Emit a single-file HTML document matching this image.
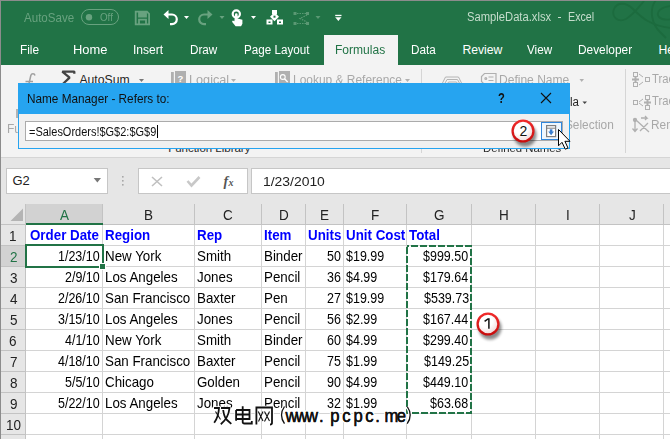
<!DOCTYPE html>
<html><head><meta charset="utf-8">
<style>
*{margin:0;padding:0;box-sizing:border-box}
html,body{width:670px;height:439px;overflow:hidden;background:#fff}
body{position:relative;font-family:"Liberation Sans",sans-serif}
.a{position:absolute}
.t{position:absolute;white-space:pre;line-height:1}
svg{position:absolute;overflow:visible}
</style></head><body>

<div class="a" style="left:0px;top:0px;width:670px;height:65px;background:#217346;"></div>
<svg style="left:0;top:0" width="670" height="65"><g fill="none" stroke="#1c6b3e" stroke-width="1.8">
<path d="M644,1 C639,7 633,15 626,19 C618,23 611,17 614,9 C617,2 626,2 633,9 C641,17 650,26 672,28"/>
<path d="M656,0 C649,9 651,24 661,33 L666,38"/>
<path d="M672,6 C662,6 655,12 659,17 C662,20 667,20 672,19"/>
</g></svg>
<div class="a" style="left:0px;top:0px;width:670px;height:1px;background:#8c8c8c;"></div>
<div class="a" style="left:0px;top:0px;width:1px;height:439px;background:#8c8c8c;"></div>
<div class="t" style="left:24.40px;top:11.69px;font-size:12.06px;color:#68a27f;font-weight:400;transform:scaleX(0.9603);transform-origin:0 0;">AutoSave</div>
<div class="a" style="left:81px;top:9px;width:38px;height:16px;background:transparent;border:1.2px solid #68a27f;border-radius:8px"></div>
<svg style="left:0;top:0" width="670" height="36"><circle cx="89" cy="17.2" r="3.2" fill="#68a27f"/></svg>
<div class="t" style="left:99.86px;top:11.87px;font-size:10.90px;color:#68a27f;font-weight:400;transform:scaleX(0.8993);transform-origin:0 0;">Off</div>
<div class="t" style="left:466.80px;top:11.40px;font-size:12.65px;color:#c5ddcc;font-weight:400;transform:scaleX(0.8874);transform-origin:0 0;">SampleData.xlsx</div>
<div class="a" style="left:558px;top:17px;width:3px;height:1.2px;background:#c5ddcc;"></div>
<div class="t" style="left:567.84px;top:11.40px;font-size:12.65px;color:#c5ddcc;font-weight:400;transform:scaleX(0.8458);transform-origin:0 0;">Excel</div>
<svg style="left:0;top:0" width="670" height="36">
<g fill="none" stroke="#68a27f" stroke-width="1.8">
<path d="M135.7,11.7 h11.3 l2.1,2.1 v10.5 h-13.4 z"/>
<path d="M139,12 v4.5 h7 v-4.5"/>
<path d="M139,24.5 v-4.8 h7 v4.8"/>
</g>
<rect x="139" y="12" width="7" height="4.5" fill="#68a27f"/>
<g fill="none" stroke="#fff" stroke-width="2.2">
<path d="M167,14.5 h5 a4.8,4.8 0 0 1 0,9.6 h-2"/>
</g>
<polygon points="163.5,14.5 168.5,10 168.5,19" fill="#fff"/>
<polygon points="184,16 189,16 186.5,19" fill="#fff"/>
<g fill="none" stroke="#68a27f" stroke-width="2.2">
<path d="M209,14.5 h-5 a4.8,4.8 0 0 0 0,9.6 h2"/>
</g>
<polygon points="212.5,14.5 207.5,10 207.5,19" fill="#68a27f"/>
<polygon points="219.5,16 224.5,16 222,19" fill="#68a27f"/>
<circle cx="236.3" cy="14" r="3.6" fill="none" stroke="#fff" stroke-width="2.2"/>
<path d="M235,14.5 a1.3,1.3 0 0 1 2.6,0 v4 l4.8,1.2 v4 l-1.3,2.5 h-5.5 l-3.6,-4.5 l0.8,-1.2 l1.6,0.8 z" fill="#fff"/>
<polygon points="251,16 256,16 253.5,19" fill="#fff"/>
<g fill="#fff">
<rect x="272" y="10" width="5" height="4.2"/>
<rect x="266.5" y="19.5" width="6" height="5"/>
<rect x="277" y="19.5" width="6" height="5"/>
<rect x="271.3" y="13.5" width="6.4" height="6.4" transform="rotate(45 274.5 16.7)"/>
</g>
<g fill="#217346">
<rect x="273.5" y="15.7" width="2" height="2"/>
<rect x="268.5" y="21.5" width="2" height="1.5"/>
<rect x="279" y="21.5" width="2" height="1.5"/>
</g>
<g fill="#5a9873">
<rect x="293.5" y="12" width="3" height="3"/><rect x="306" y="12" width="3" height="3"/><rect x="293.5" y="22" width="3" height="3"/><rect x="306" y="22" width="3" height="3"/>
</g>
<g fill="none" stroke="#5a9873" stroke-width="1.2">
<path d="M297,13.5 h9 M307,15 l-7,3.5 l7,3.5 M297,23.5 h9" stroke-dasharray="1.5 1"/>
</g>
<polygon points="315.5,16 320.5,16 318,19" fill="#5a9873"/>
<rect x="335.2" y="14.8" width="6.3" height="1.3" fill="#fff"/>
<polygon points="335.2,17.3 341.5,17.3 338.35,21" fill="#fff"/>
</svg>

<div class="a" style="left:324px;top:35px;width:74px;height:30px;background:#f3f3f3;"></div>
<div class="t" style="left:20.35px;top:43.86px;font-size:12.21px;color:#fff;font-weight:400;transform:scaleX(0.9707);transform-origin:0 0;">File</div>
<div class="t" style="left:73.47px;top:43.86px;font-size:12.21px;color:#fff;font-weight:400;transform:scaleX(1.0577);transform-origin:0 0;">Home</div>
<div class="t" style="left:132.91px;top:43.86px;font-size:12.21px;color:#fff;font-weight:400;transform:scaleX(0.9876);transform-origin:0 0;">Insert</div>
<div class="t" style="left:189.66px;top:43.86px;font-size:12.21px;color:#fff;font-weight:400;transform:scaleX(0.9589);transform-origin:0 0;">Draw</div>
<div class="t" style="left:243.57px;top:43.86px;font-size:12.21px;color:#fff;font-weight:400;transform:scaleX(0.9553);transform-origin:0 0;">Page Layout</div>
<div class="t" style="left:335.34px;top:43.86px;font-size:12.21px;color:#217346;font-weight:400;transform:scaleX(0.9877);transform-origin:0 0;">Formulas</div>
<div class="t" style="left:411.06px;top:43.86px;font-size:12.21px;color:#fff;font-weight:400;transform:scaleX(0.9603);transform-origin:0 0;">Data</div>
<div class="t" style="left:462.42px;top:43.86px;font-size:12.21px;color:#fff;font-weight:400;">Review</div>
<div class="t" style="left:526.94px;top:43.86px;font-size:12.21px;color:#fff;font-weight:400;transform:scaleX(0.9546);transform-origin:0 0;">View</div>
<div class="t" style="left:578.05px;top:43.86px;font-size:12.21px;color:#fff;font-weight:400;transform:scaleX(0.9733);transform-origin:0 0;">Developer</div>
<div class="t" style="left:658.52px;top:43.86px;font-size:12.21px;color:#fff;font-weight:400;">Help</div>
<div class="a" style="left:1px;top:65px;width:669px;height:92px;background:#f3f3f3;"></div>
<div class="a" style="left:1px;top:157px;width:669px;height:1px;background:#d5d5d5;"></div>
<div class="a" style="left:421px;top:69px;width:1px;height:84px;background:#d5d5d5;"></div>
<div class="a" style="left:625px;top:69px;width:1px;height:84px;background:#d5d5d5;"></div>
<div class="t" style="left:79.40px;top:73.86px;font-size:12.21px;color:#262626;font-weight:400;">AutoSum</div>
<div class="t" style="left:189.19px;top:73.86px;font-size:12.21px;color:#a8a8a8;font-weight:400;transform:scaleX(1.0387);transform-origin:0 0;">Logical</div>
<div class="t" style="left:293.04px;top:73.86px;font-size:12.21px;color:#a8a8a8;font-weight:400;transform:scaleX(0.9794);transform-origin:0 0;">Lookup &amp; Reference</div>
<div class="t" style="left:499.04px;top:73.86px;font-size:12.21px;color:#a8a8a8;font-weight:400;transform:scaleX(0.9869);transform-origin:0 0;">Define Name</div>
<div class="t" style="left:652.07px;top:72.80px;font-size:12.65px;color:#a8a8a8;font-weight:400;transform:scaleX(0.8923);transform-origin:0 0;">Trace</div>
<div class="t" style="left:652.07px;top:95.07px;font-size:12.79px;color:#a8a8a8;font-weight:400;transform:scaleX(0.8821);transform-origin:0 0;">Trace</div>
<div class="t" style="left:651.35px;top:118.54px;font-size:12.35px;color:#a8a8a8;font-weight:400;transform:scaleX(0.9601);transform-origin:0 0;">Remove</div>
<div class="t" style="left:569.55px;top:96.32px;font-size:12.50px;color:#262626;font-weight:400;transform:scaleX(0.9239);transform-origin:0 0;">la</div>
<div class="t" style="left:499.41px;top:119.32px;font-size:12.50px;color:#a8a8a8;font-weight:400;transform:scaleX(0.9495);transform-origin:0 0;">Create from Selection</div>
<div class="t" style="left:6.64px;top:123.26px;font-size:12.21px;color:#a8a8a8;font-weight:400;transform:scaleX(0.9855);transform-origin:0 0;">Function</div>
<div class="a" style="left:16px;top:109px;width:2px;height:9px;background:#b4b4b4;"></div>
<div class="t" style="left:168.17px;top:143.48px;font-size:11.48px;color:#2a2a2a;font-weight:400;">Function Library</div>
<div class="t" style="left:483.29px;top:143.48px;font-size:11.48px;color:#2a2a2a;font-weight:400;transform:scaleX(0.9898);transform-origin:0 0;">Defined Names</div>
<svg style="left:0;top:0" width="670" height="160">
<path d="M35,75.5 C34.5,73 31.5,73 30.8,75.5 L28.8,84.5 M25.5,81.6 H33" fill="none" stroke="#a0a0a0" stroke-width="1.5"/>
<path d="M74.3,73.8 V71.6 H62.3 L69.6,77.6 L62.8,84" fill="none" stroke="#444" stroke-width="2.3" stroke-linejoin="bevel"/>
<polygon points="139,79 144,79 141.5,82" fill="#777"/>
<rect x="171" y="72" width="2.8" height="12" fill="#b0b0b0"/>
<rect x="175" y="71" width="11" height="13" fill="#b0b0b0"/>
<text x="177.5" y="82" font-family="Liberation Sans" font-weight="bold" font-size="9.5" fill="#fff">?</text>
<polygon points="231,79 236,79 233.5,82" fill="#b0b0b0"/>
<rect x="275" y="72" width="2.8" height="12" fill="#b0b0b0"/>
<rect x="279" y="71" width="11" height="13" fill="#b0b0b0"/>
<circle cx="282.8" cy="77" r="2.4" fill="none" stroke="#fff" stroke-width="1.1"/>
<path d="M284.5,78.8 l3.2,3.2" stroke="#fff" stroke-width="1.4"/>
<polygon points="405,79 410,79 407.5,82" fill="#b0b0b0"/>
<g fill="none" stroke="#b4b4b4" stroke-width="1"><path d="M441,86 l4.5,-9 h13 l4.5,9 M443.5,86 l3.5,-6.5 h10.5 l3.5,6.5 M446,86 l2.5,-4 h8 l2.5,4"/></g>
<g fill="none" stroke="#b0b0b0" stroke-width="1.2"><path d="M484.5,73.5 h11.5 v11 h-11.5 l-3,-3 v-5 z"/><circle cx="485.8" cy="78.5" r="0.9"/><path d="M488.5,77 h5 M488.5,80.5 h5"/></g>
<polygon points="579.5,79 584,79 581.7,82" fill="#b0b0b0"/>
<polygon points="582.5,101.5 587,101.5 584.7,104" fill="#444"/>
<g fill="none" stroke="#b0b0b0" stroke-width="1"><rect x="633.5" y="72.5" width="4" height="4"/><rect x="633.5" y="82.5" width="4" height="4"/><rect x="645.5" y="77.5" width="4" height="4"/><path d="M639,74 l4,3 M639,85 l4,-3"/></g>
<g fill="#b0b0b0"><rect x="632" y="78.5" width="7" height="2"/><rect x="634.5" y="76" width="2" height="7"/></g>
<g fill="none" stroke="#b0b0b0" stroke-width="1"><rect x="633.5" y="100.5" width="4" height="4"/><rect x="645.5" y="95.5" width="4" height="4"/><rect x="645.5" y="105.5" width="4" height="4"/><path d="M639,102 l4,-3 M639,103 l4,3"/></g>
<g fill="#b0b0b0"><rect x="644" y="101.5" width="7" height="2"/><rect x="646.5" y="99" width="2" height="7"/></g>
<g fill="none" stroke="#b0b0b0" stroke-width="1.3"><circle cx="635" cy="120" r="1.5" fill="#b0b0b0"/><path d="M635,120 v11 M632.5,128.5 l2.5,3 l2.5,-3 M636,120 l13,12 M640,131 l8,-8 M641,118 h6 l-2,-2 M647,118 l-2,2"/></g>
</svg>

<div class="a" style="left:1px;top:158px;width:669px;height:46px;background:#e6e6e6;"></div>
<div class="a" style="left:6px;top:168px;width:102px;height:26px;background:#fff;border:1px solid #c6c6c6"></div>
<div class="t" style="left:12.55px;top:175.15px;font-size:12.94px;color:#222;font-weight:400;">G2</div>
<div class="a" style="left:138px;top:168px;width:110px;height:26px;background:#fff;border:1px solid #c6c6c6"></div>
<div class="a" style="left:251px;top:168px;width:420px;height:26px;background:#fff;border:1px solid #c6c6c6"></div>
<div class="t" style="left:262.56px;top:174.78px;font-size:13.37px;color:#222;font-weight:400;transform:scaleX(1.0408);transform-origin:0 0;">1/23/2010</div>
<svg style="left:0;top:0" width="670" height="204">
<polygon points="93.7,178 101,178 97.35,182.4" fill="#777"/>
<g fill="#a8a8a8"><rect x="122" y="176" width="1.6" height="1.6"/><rect x="122" y="180" width="1.6" height="1.6"/><rect x="122" y="184" width="1.6" height="1.6"/></g>
<path d="M152,177 l10,9 M162,177 l-10,9" stroke="#c0c0c0" stroke-width="1.6"/>
<path d="M187.5,181 l4,4.5 l8,-8.5" fill="none" stroke="#c8c8c8" stroke-width="2.6"/>
<text x="223.5" y="185.5" font-family="Liberation Serif" font-style="italic" font-weight="bold" font-size="14" fill="#555">f</text>
<text x="228.5" y="185.5" font-family="Liberation Serif" font-style="italic" font-weight="bold" font-size="10" fill="#555">x</text>
</svg>

<div class="a" style="left:1px;top:204px;width:669px;height:21px;background:#e6e6e6;"></div>
<div class="a" style="left:1px;top:225px;width:25px;height:214px;background:#e6e6e6;"></div>
<div class="a" style="left:26px;top:204px;width:76px;height:19px;background:#d2d2d2;"></div>
<div class="a" style="left:1px;top:246px;width:24px;height:20px;background:#d2d2d2;"></div>
<svg style="left:0;top:0" width="670" height="439"><polygon points="23,208.5 23,221 10.5,221" fill="#b4b4b4"/></svg>
<div class="a" style="left:102px;top:204px;width:1px;height:20px;background:#c3c3c3;"></div>
<div class="a" style="left:102px;top:225px;width:1px;height:214px;background:#d4d4d4;"></div>
<div class="a" style="left:194px;top:204px;width:1px;height:20px;background:#c3c3c3;"></div>
<div class="a" style="left:194px;top:225px;width:1px;height:214px;background:#d4d4d4;"></div>
<div class="a" style="left:261px;top:204px;width:1px;height:20px;background:#c3c3c3;"></div>
<div class="a" style="left:261px;top:225px;width:1px;height:214px;background:#d4d4d4;"></div>
<div class="a" style="left:305px;top:204px;width:1px;height:20px;background:#c3c3c3;"></div>
<div class="a" style="left:305px;top:225px;width:1px;height:214px;background:#d4d4d4;"></div>
<div class="a" style="left:343px;top:204px;width:1px;height:20px;background:#c3c3c3;"></div>
<div class="a" style="left:343px;top:225px;width:1px;height:214px;background:#d4d4d4;"></div>
<div class="a" style="left:406px;top:204px;width:1px;height:20px;background:#c3c3c3;"></div>
<div class="a" style="left:406px;top:225px;width:1px;height:214px;background:#d4d4d4;"></div>
<div class="a" style="left:471px;top:204px;width:1px;height:20px;background:#c3c3c3;"></div>
<div class="a" style="left:471px;top:225px;width:1px;height:214px;background:#d4d4d4;"></div>
<div class="a" style="left:535px;top:204px;width:1px;height:20px;background:#c3c3c3;"></div>
<div class="a" style="left:535px;top:225px;width:1px;height:214px;background:#d4d4d4;"></div>
<div class="a" style="left:599px;top:204px;width:1px;height:20px;background:#c3c3c3;"></div>
<div class="a" style="left:599px;top:225px;width:1px;height:214px;background:#d4d4d4;"></div>
<div class="a" style="left:663px;top:204px;width:1px;height:20px;background:#c3c3c3;"></div>
<div class="a" style="left:663px;top:225px;width:1px;height:214px;background:#d4d4d4;"></div>
<div class="a" style="left:25px;top:204px;width:1px;height:235px;background:#c3c3c3;"></div>
<div class="a" style="left:1px;top:224px;width:669px;height:1px;background:#c3c3c3;"></div>
<div class="a" style="left:26px;top:223px;width:77px;height:2px;background:#217346;"></div>
<div class="a" style="left:1px;top:245px;width:24px;height:1px;background:#c3c3c3;"></div>
<div class="a" style="left:26px;top:245px;width:644px;height:1px;background:#d4d4d4;"></div>
<div class="a" style="left:1px;top:266px;width:24px;height:1px;background:#c3c3c3;"></div>
<div class="a" style="left:26px;top:266px;width:644px;height:1px;background:#d4d4d4;"></div>
<div class="a" style="left:1px;top:287px;width:24px;height:1px;background:#c3c3c3;"></div>
<div class="a" style="left:26px;top:287px;width:644px;height:1px;background:#d4d4d4;"></div>
<div class="a" style="left:1px;top:308px;width:24px;height:1px;background:#c3c3c3;"></div>
<div class="a" style="left:26px;top:308px;width:644px;height:1px;background:#d4d4d4;"></div>
<div class="a" style="left:1px;top:329px;width:24px;height:1px;background:#c3c3c3;"></div>
<div class="a" style="left:26px;top:329px;width:644px;height:1px;background:#d4d4d4;"></div>
<div class="a" style="left:1px;top:350px;width:24px;height:1px;background:#c3c3c3;"></div>
<div class="a" style="left:26px;top:350px;width:644px;height:1px;background:#d4d4d4;"></div>
<div class="a" style="left:1px;top:371px;width:24px;height:1px;background:#c3c3c3;"></div>
<div class="a" style="left:26px;top:371px;width:644px;height:1px;background:#d4d4d4;"></div>
<div class="a" style="left:1px;top:392px;width:24px;height:1px;background:#c3c3c3;"></div>
<div class="a" style="left:26px;top:392px;width:644px;height:1px;background:#d4d4d4;"></div>
<div class="a" style="left:1px;top:413px;width:24px;height:1px;background:#c3c3c3;"></div>
<div class="a" style="left:26px;top:413px;width:644px;height:1px;background:#d4d4d4;"></div>
<div class="a" style="left:1px;top:434px;width:24px;height:1px;background:#c3c3c3;"></div>
<div class="a" style="left:26px;top:434px;width:644px;height:1px;background:#d4d4d4;"></div>
<div class="t" style="left:59.81px;top:207.10px;font-size:15.00px;color:#217346;font-weight:400;transform:scaleX(0.9000);transform-origin:0 0;">A</div>
<div class="t" style="left:144.11px;top:207.10px;font-size:15.00px;color:#222;font-weight:400;transform:scaleX(0.9000);transform-origin:0 0;">B</div>
<div class="t" style="left:223.34px;top:207.10px;font-size:15.00px;color:#222;font-weight:400;transform:scaleX(0.9000);transform-origin:0 0;">C</div>
<div class="t" style="left:278.70px;top:207.10px;font-size:15.00px;color:#222;font-weight:400;transform:scaleX(0.9000);transform-origin:0 0;">D</div>
<div class="t" style="left:320.04px;top:207.10px;font-size:15.00px;color:#222;font-weight:400;transform:scaleX(0.9000);transform-origin:0 0;">E</div>
<div class="t" style="left:370.91px;top:207.10px;font-size:15.00px;color:#222;font-weight:400;transform:scaleX(0.9000);transform-origin:0 0;">F</div>
<div class="t" style="left:434.20px;top:207.10px;font-size:15.00px;color:#222;font-weight:400;transform:scaleX(0.9000);transform-origin:0 0;">G</div>
<div class="t" style="left:498.94px;top:207.10px;font-size:15.00px;color:#222;font-weight:400;transform:scaleX(0.9000);transform-origin:0 0;">H</div>
<div class="t" style="left:565.94px;top:207.10px;font-size:15.00px;color:#222;font-weight:400;transform:scaleX(0.9000);transform-origin:0 0;">I</div>
<div class="t" style="left:628.83px;top:207.10px;font-size:15.00px;color:#222;font-weight:400;transform:scaleX(0.9000);transform-origin:0 0;">J</div>
<div class="t" style="left:9.35px;top:228.30px;font-size:15.00px;color:#222;font-weight:400;transform:scaleX(0.9000);transform-origin:0 0;">1</div>
<div class="t" style="left:9.55px;top:249.30px;font-size:15.00px;color:#217346;font-weight:400;transform:scaleX(0.9000);transform-origin:0 0;">2</div>
<div class="t" style="left:9.55px;top:270.30px;font-size:15.00px;color:#222;font-weight:400;transform:scaleX(0.9000);transform-origin:0 0;">3</div>
<div class="t" style="left:9.62px;top:291.30px;font-size:15.00px;color:#222;font-weight:400;transform:scaleX(0.9000);transform-origin:0 0;">4</div>
<div class="t" style="left:9.55px;top:312.30px;font-size:15.00px;color:#222;font-weight:400;transform:scaleX(0.9000);transform-origin:0 0;">5</div>
<div class="t" style="left:9.49px;top:333.30px;font-size:15.00px;color:#222;font-weight:400;transform:scaleX(0.9000);transform-origin:0 0;">6</div>
<div class="t" style="left:9.55px;top:354.30px;font-size:15.00px;color:#222;font-weight:400;transform:scaleX(0.9000);transform-origin:0 0;">7</div>
<div class="t" style="left:9.52px;top:375.30px;font-size:15.00px;color:#222;font-weight:400;transform:scaleX(0.9000);transform-origin:0 0;">8</div>
<div class="t" style="left:9.55px;top:396.30px;font-size:15.00px;color:#222;font-weight:400;transform:scaleX(0.9000);transform-origin:0 0;">9</div>
<div class="t" style="left:5.54px;top:417.30px;font-size:15.00px;color:#222;font-weight:400;transform:scaleX(0.9000);transform-origin:0 0;">10</div>
<div class="t" style="left:30.30px;top:227.78px;font-size:14.20px;color:#0000ff;font-weight:700;transform:scaleX(0.9400);transform-origin:0 0;">Order Date</div>
<div class="t" style="left:104.80px;top:227.78px;font-size:14.20px;color:#0000ff;font-weight:700;transform:scaleX(0.9400);transform-origin:0 0;">Region</div>
<div class="t" style="left:196.80px;top:227.78px;font-size:14.20px;color:#0000ff;font-weight:700;transform:scaleX(0.9400);transform-origin:0 0;">Rep</div>
<div class="t" style="left:263.80px;top:227.78px;font-size:14.20px;color:#0000ff;font-weight:700;transform:scaleX(0.9400);transform-origin:0 0;">Item</div>
<div class="t" style="left:307.80px;top:227.78px;font-size:14.20px;color:#0000ff;font-weight:700;transform:scaleX(0.9400);transform-origin:0 0;">Units</div>
<div class="t" style="left:345.80px;top:227.78px;font-size:14.20px;color:#0000ff;font-weight:700;transform:scaleX(0.9400);transform-origin:0 0;">Unit Cost</div>
<div class="t" style="left:408.80px;top:227.78px;font-size:14.20px;color:#0000ff;font-weight:700;transform:scaleX(0.9400);transform-origin:0 0;">Total</div>
<div class="t" style="left:57.96px;top:248.78px;font-size:14.20px;color:#000;font-weight:400;transform:scaleX(0.8800);transform-origin:0 0;">1/23/10</div>
<div class="t" style="left:104.80px;top:248.78px;font-size:14.20px;color:#000;font-weight:400;transform:scaleX(0.9400);transform-origin:0 0;">New York</div>
<div class="t" style="left:196.80px;top:248.78px;font-size:14.20px;color:#000;font-weight:400;transform:scaleX(0.9400);transform-origin:0 0;">Smith</div>
<div class="t" style="left:263.80px;top:248.78px;font-size:14.20px;color:#000;font-weight:400;transform:scaleX(0.9400);transform-origin:0 0;">Binder</div>
<div class="t" style="left:326.77px;top:248.78px;font-size:14.20px;color:#000;font-weight:400;transform:scaleX(0.8800);transform-origin:0 0;">50</div>
<div class="t" style="left:345.80px;top:248.78px;font-size:14.20px;color:#000;font-weight:400;transform:scaleX(0.8800);transform-origin:0 0;">$19.99</div>
<div class="t" style="left:423.46px;top:248.78px;font-size:14.20px;color:#000;font-weight:400;transform:scaleX(0.8800);transform-origin:0 0;">$999.50</div>
<div class="t" style="left:64.90px;top:269.78px;font-size:14.20px;color:#000;font-weight:400;transform:scaleX(0.8800);transform-origin:0 0;">2/9/10</div>
<div class="t" style="left:104.80px;top:269.78px;font-size:14.20px;color:#000;font-weight:400;transform:scaleX(0.9400);transform-origin:0 0;">Los Angeles</div>
<div class="t" style="left:196.80px;top:269.78px;font-size:14.20px;color:#000;font-weight:400;transform:scaleX(0.9400);transform-origin:0 0;">Jones</div>
<div class="t" style="left:263.80px;top:269.78px;font-size:14.20px;color:#000;font-weight:400;transform:scaleX(0.9400);transform-origin:0 0;">Pencil</div>
<div class="t" style="left:326.83px;top:269.78px;font-size:14.20px;color:#000;font-weight:400;transform:scaleX(0.8800);transform-origin:0 0;">36</div>
<div class="t" style="left:345.80px;top:269.78px;font-size:14.20px;color:#000;font-weight:400;transform:scaleX(0.8800);transform-origin:0 0;">$4.99</div>
<div class="t" style="left:423.40px;top:269.78px;font-size:14.20px;color:#000;font-weight:400;transform:scaleX(0.8800);transform-origin:0 0;">$179.64</div>
<div class="t" style="left:57.96px;top:290.78px;font-size:14.20px;color:#000;font-weight:400;transform:scaleX(0.8800);transform-origin:0 0;">2/26/10</div>
<div class="t" style="left:104.80px;top:290.78px;font-size:14.20px;color:#000;font-weight:400;transform:scaleX(0.9400);transform-origin:0 0;">San Francisco</div>
<div class="t" style="left:196.80px;top:290.78px;font-size:14.20px;color:#000;font-weight:400;transform:scaleX(0.9400);transform-origin:0 0;">Baxter</div>
<div class="t" style="left:263.80px;top:290.78px;font-size:14.20px;color:#000;font-weight:400;transform:scaleX(0.9400);transform-origin:0 0;">Pen</div>
<div class="t" style="left:326.95px;top:290.78px;font-size:14.20px;color:#000;font-weight:400;transform:scaleX(0.8800);transform-origin:0 0;">27</div>
<div class="t" style="left:345.80px;top:290.78px;font-size:14.20px;color:#000;font-weight:400;transform:scaleX(0.8800);transform-origin:0 0;">$19.99</div>
<div class="t" style="left:423.53px;top:290.78px;font-size:14.20px;color:#000;font-weight:400;transform:scaleX(0.8800);transform-origin:0 0;">$539.73</div>
<div class="t" style="left:57.96px;top:311.78px;font-size:14.20px;color:#000;font-weight:400;transform:scaleX(0.8800);transform-origin:0 0;">3/15/10</div>
<div class="t" style="left:104.80px;top:311.78px;font-size:14.20px;color:#000;font-weight:400;transform:scaleX(0.9400);transform-origin:0 0;">Los Angeles</div>
<div class="t" style="left:196.80px;top:311.78px;font-size:14.20px;color:#000;font-weight:400;transform:scaleX(0.9400);transform-origin:0 0;">Jones</div>
<div class="t" style="left:263.80px;top:311.78px;font-size:14.20px;color:#000;font-weight:400;transform:scaleX(0.9400);transform-origin:0 0;">Pencil</div>
<div class="t" style="left:326.83px;top:311.78px;font-size:14.20px;color:#000;font-weight:400;transform:scaleX(0.8800);transform-origin:0 0;">56</div>
<div class="t" style="left:345.80px;top:311.78px;font-size:14.20px;color:#000;font-weight:400;transform:scaleX(0.8800);transform-origin:0 0;">$2.99</div>
<div class="t" style="left:423.40px;top:311.78px;font-size:14.20px;color:#000;font-weight:400;transform:scaleX(0.8800);transform-origin:0 0;">$167.44</div>
<div class="t" style="left:64.90px;top:332.78px;font-size:14.20px;color:#000;font-weight:400;transform:scaleX(0.8800);transform-origin:0 0;">4/1/10</div>
<div class="t" style="left:104.80px;top:332.78px;font-size:14.20px;color:#000;font-weight:400;transform:scaleX(0.9400);transform-origin:0 0;">New York</div>
<div class="t" style="left:196.80px;top:332.78px;font-size:14.20px;color:#000;font-weight:400;transform:scaleX(0.9400);transform-origin:0 0;">Smith</div>
<div class="t" style="left:263.80px;top:332.78px;font-size:14.20px;color:#000;font-weight:400;transform:scaleX(0.9400);transform-origin:0 0;">Binder</div>
<div class="t" style="left:326.77px;top:332.78px;font-size:14.20px;color:#000;font-weight:400;transform:scaleX(0.8800);transform-origin:0 0;">60</div>
<div class="t" style="left:345.80px;top:332.78px;font-size:14.20px;color:#000;font-weight:400;transform:scaleX(0.8800);transform-origin:0 0;">$4.99</div>
<div class="t" style="left:423.46px;top:332.78px;font-size:14.20px;color:#000;font-weight:400;transform:scaleX(0.8800);transform-origin:0 0;">$299.40</div>
<div class="t" style="left:57.96px;top:353.78px;font-size:14.20px;color:#000;font-weight:400;transform:scaleX(0.8800);transform-origin:0 0;">4/18/10</div>
<div class="t" style="left:104.80px;top:353.78px;font-size:14.20px;color:#000;font-weight:400;transform:scaleX(0.9400);transform-origin:0 0;">San Francisco</div>
<div class="t" style="left:196.80px;top:353.78px;font-size:14.20px;color:#000;font-weight:400;transform:scaleX(0.9400);transform-origin:0 0;">Baxter</div>
<div class="t" style="left:263.80px;top:353.78px;font-size:14.20px;color:#000;font-weight:400;transform:scaleX(0.9400);transform-origin:0 0;">Pencil</div>
<div class="t" style="left:326.83px;top:353.78px;font-size:14.20px;color:#000;font-weight:400;transform:scaleX(0.8800);transform-origin:0 0;">75</div>
<div class="t" style="left:345.80px;top:353.78px;font-size:14.20px;color:#000;font-weight:400;transform:scaleX(0.8800);transform-origin:0 0;">$1.99</div>
<div class="t" style="left:423.53px;top:353.78px;font-size:14.20px;color:#000;font-weight:400;transform:scaleX(0.8800);transform-origin:0 0;">$149.25</div>
<div class="t" style="left:64.90px;top:374.78px;font-size:14.20px;color:#000;font-weight:400;transform:scaleX(0.8800);transform-origin:0 0;">5/5/10</div>
<div class="t" style="left:104.80px;top:374.78px;font-size:14.20px;color:#000;font-weight:400;transform:scaleX(0.9400);transform-origin:0 0;">Chicago</div>
<div class="t" style="left:196.80px;top:374.78px;font-size:14.20px;color:#000;font-weight:400;transform:scaleX(0.9400);transform-origin:0 0;">Golden</div>
<div class="t" style="left:263.80px;top:374.78px;font-size:14.20px;color:#000;font-weight:400;transform:scaleX(0.9400);transform-origin:0 0;">Pencil</div>
<div class="t" style="left:326.77px;top:374.78px;font-size:14.20px;color:#000;font-weight:400;transform:scaleX(0.8800);transform-origin:0 0;">90</div>
<div class="t" style="left:345.80px;top:374.78px;font-size:14.20px;color:#000;font-weight:400;transform:scaleX(0.8800);transform-origin:0 0;">$4.99</div>
<div class="t" style="left:423.46px;top:374.78px;font-size:14.20px;color:#000;font-weight:400;transform:scaleX(0.8800);transform-origin:0 0;">$449.10</div>
<div class="t" style="left:57.96px;top:395.78px;font-size:14.20px;color:#000;font-weight:400;transform:scaleX(0.8800);transform-origin:0 0;">5/22/10</div>
<div class="t" style="left:104.80px;top:395.78px;font-size:14.20px;color:#000;font-weight:400;transform:scaleX(0.9400);transform-origin:0 0;">Los Angeles</div>
<div class="t" style="left:196.80px;top:395.78px;font-size:14.20px;color:#000;font-weight:400;transform:scaleX(0.9400);transform-origin:0 0;">Jones</div>
<div class="t" style="left:263.80px;top:395.78px;font-size:14.20px;color:#000;font-weight:400;transform:scaleX(0.9400);transform-origin:0 0;">Pencil</div>
<div class="t" style="left:326.95px;top:395.78px;font-size:14.20px;color:#000;font-weight:400;transform:scaleX(0.8800);transform-origin:0 0;">32</div>
<div class="t" style="left:345.80px;top:395.78px;font-size:14.20px;color:#000;font-weight:400;transform:scaleX(0.8800);transform-origin:0 0;">$1.99</div>
<div class="t" style="left:430.46px;top:395.78px;font-size:14.20px;color:#000;font-weight:400;transform:scaleX(0.8800);transform-origin:0 0;">$63.68</div>
<div class="a" style="left:25px;top:244px;width:79px;height:24px;background:transparent;border:2px solid #217346"></div>
<div class="a" style="left:99px;top:263px;width:7px;height:7px;background:#fff;"></div>
<div class="a" style="left:100px;top:264px;width:5px;height:5px;background:#217346;"></div>
<svg style="left:0;top:0" width="670" height="439"><rect x="407" y="246" width="64" height="167" fill="none" stroke="#217346" stroke-width="2" stroke-dasharray="7 2" stroke-dashoffset="5"/></svg>
<div class="a" style="left:18px;top:83px;width:552px;height:66px;background:#f0f0f0;border:1px solid #26a4f0"></div>
<div class="a" style="left:18px;top:83px;width:552px;height:31px;background:#26a4f0;"></div>
<div class="t" style="left:26.56px;top:93.09px;font-size:12.06px;color:#111;font-weight:400;transform:scaleX(0.9771);transform-origin:0 0;">Name Manager - Refers to:</div>
<div class="t" style="left:497.90px;top:90.60px;font-size:14.53px;color:#111;font-weight:700;transform:scaleX(0.7689);transform-origin:0 0;">?</div>
<svg style="left:0;top:0" width="670" height="160"><path d="M541,93 l10,10 M551,93 l-10,10" stroke="#111" stroke-width="1.1"/></svg>
<div class="a" style="left:25px;top:121px;width:538px;height:20px;background:#fff;border:1px solid #ababab"></div>
<div class="t" style="left:28.95px;top:125.62px;font-size:12.50px;color:#111;font-weight:400;transform:scaleX(0.8783);transform-origin:0 0;">=SalesOrders!$G$2:$G$9</div>
<div class="a" style="left:157px;top:125px;width:1px;height:13px;background:#000;"></div>
<div class="a" style="left:541px;top:122px;width:21px;height:18px;background:#eef6fd;border:1.5px solid #2f86dc"></div>
<svg style="left:0;top:0" width="670" height="160">
<rect x="546.6" y="125.6" width="9" height="11" fill="#fff" stroke="#7f7f7f" stroke-width="1.2"/>
<path d="M546.6,128.2 h9" stroke="#7f7f7f" stroke-width="1"/>
<path d="M551.1,129.3 v3.5" stroke="#3a7fd0" stroke-width="2.6"/>
<polygon points="548.2,131.5 554,131.5 551.1,135.3" fill="#3a7fd0"/>
</svg>

<svg style="left:0;top:0" width="670" height="439">
<defs>
<radialGradient id="g" cx="0.4" cy="0.35" r="0.7"><stop offset="0.45" stop-color="#fff"/><stop offset="1" stop-color="#efd4d4"/></radialGradient><linearGradient id="rg" x1="0" y1="0" x2="0" y2="1"><stop offset="0" stop-color="#f02a2a"/><stop offset="1" stop-color="#c80e0e"/></linearGradient>
<filter id="sh" x="-50%" y="-50%" width="200%" height="200%"><feGaussianBlur stdDeviation="1.6"/></filter>
</defs>
<circle cx="525" cy="135" r="11.5" fill="#000" opacity="0.45" filter="url(#sh)"/>
<circle cx="523" cy="131" r="10.4" fill="url(#g)" stroke="url(#rg)" stroke-width="2.3"/>
<circle cx="490" cy="328" r="11.5" fill="#000" opacity="0.45" filter="url(#sh)"/>
<circle cx="488" cy="324" r="10.4" fill="url(#g)" stroke="url(#rg)" stroke-width="2.3"/>
<text x="523.3" y="135.5" text-anchor="middle" font-family="Liberation Sans" font-size="14" fill="#111">2</text>
<path d="M484.6,321.3 l3.4,-2.4 h0.9 v9.9" fill="none" stroke="#111" stroke-width="1.5"/>
<path d="M558.5,129.5 V145.8 L562,142.3 L565.3,149.2 L568,148 L564.9,141.3 H570 Z" fill="#fff" stroke="#000" stroke-width="1"/>
</svg>
<svg style="left:0;top:0" width="670" height="439">
<defs><g id="wm">
<path d="M214,408 H219 Q218.5,417 214.2,422.8"/>
<path d="M215.5,411.5 L220.5,419.5" stroke-width="1.1"/>
<path d="M221,408 H229.5 Q228.5,418 220.8,424.3"/>
<path d="M223.2,410 Q224,416.5 226.5,419.5 L231.3,423.8"/>
<path d="M236.1,410 V420.8 M236.1,410 H249.5 V419 H236.1 M236.1,414.5 H249.5 M242.7,406.3 V422 Q242.7,423.5 244.5,423.5 H251.8 V421"/>
<path d="M256.4,424.5 V407.5 H272 V423 Q272,424.5 270,424.5"/>
<path d="M258.3,411.5 L263,421 M263,411.5 L258.5,421.5 M264.5,411.5 L269.5,421 M269.5,411.5 L264.5,421.5" stroke-width="1.1"/>
</g></defs>
<use href="#wm" fill="none" stroke="#fff" stroke-width="3.6" stroke-linecap="round" stroke-linejoin="round"/>
<use href="#wm" fill="none" stroke="#111" stroke-width="1.8" stroke-linecap="butt" stroke-linejoin="miter"/>
<path d="M284.5,406.5 Q278.5,415 284.5,423.7 M407.2,406.5 Q413.2,415 407.2,423.7" fill="none" stroke="#fff" stroke-width="3.5"/><path d="M284.5,406.5 Q278.5,415 284.5,423.7 M407.2,406.5 Q413.2,415 407.2,423.7" fill="none" stroke="#111" stroke-width="1.3"/><text transform="scale(0.9,1)" x="323.9 335.3 346.7 357.0 372.2 385.0 397.8 410.6 419.4 435.0 446.1" y="422" text-anchor="middle" font-family="Liberation Sans" font-size="18.5" fill="#111" stroke="#fff" stroke-width="3" paint-order="stroke" stroke-linejoin="round">www.pcpc.me</text>
<text transform="scale(0.9,1)" x="323.9 335.3 346.7 357.0 372.2 385.0 397.8 410.6 419.4 435.0 446.1" y="422" text-anchor="middle" font-family="Liberation Sans" font-size="18.5" fill="#111" stroke="#111" stroke-width="0.45" stroke-linejoin="round">www.pcpc.me</text>
</svg>

</body></html>
